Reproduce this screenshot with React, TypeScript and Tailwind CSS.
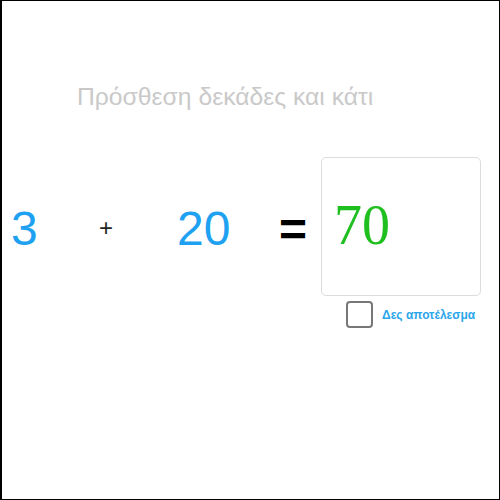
export default function App() {
  return (
    <div
      className="w-[500px] h-[500px] border border-l-2 border-black bg-white relative overflow-hidden"
      style={{ fontFamily: '"Liberation Sans", Arial, sans-serif' }}
    >
      <div className="pt-[80px] pl-[75px] text-[24.7px] leading-[32px] text-[#c9c9c9]">
        Πρόσθεση δεκάδες και κάτι
      </div>
      <div className="mt-[44px] flex items-start">
        <div className="ml-[9px] w-[88px] mt-[44px] text-[48px] leading-[56px] text-[#1ea1f1]">3</div>
        <div className="w-[78px] mt-[56px] text-[24px] leading-[30px] text-[#222]">+</div>
        <div className="w-[102px] mt-[44px] text-[48px] leading-[56px] text-[#1ea1f1]">20</div>
        <div className="w-[42px] mt-[45px] text-[48px] font-bold leading-[56px] text-black">=</div>
        <div className="flex flex-col items-start">
          <div className="w-[160px] h-[139px] border border-[#dcdcdc] rounded-[5px] pl-[12px] pt-[37px]">
            <span
              className="text-[56px] leading-[60px] text-[#1fbf1f]"
              style={{ fontFamily: '"Liberation Serif", "Times New Roman", serif' }}
            >
              70
            </span>
          </div>
          <div className="mt-[5px] ml-[25px] flex items-center gap-[9px]">
            <div className="w-[27px] h-[27px] border-2 border-[#777] rounded-[4px]" />
            <span className="text-[12px] font-bold text-[#2aa6ea]">Δες αποτέλεσμα</span>
          </div>
        </div>
      </div>
    </div>
  );
}
